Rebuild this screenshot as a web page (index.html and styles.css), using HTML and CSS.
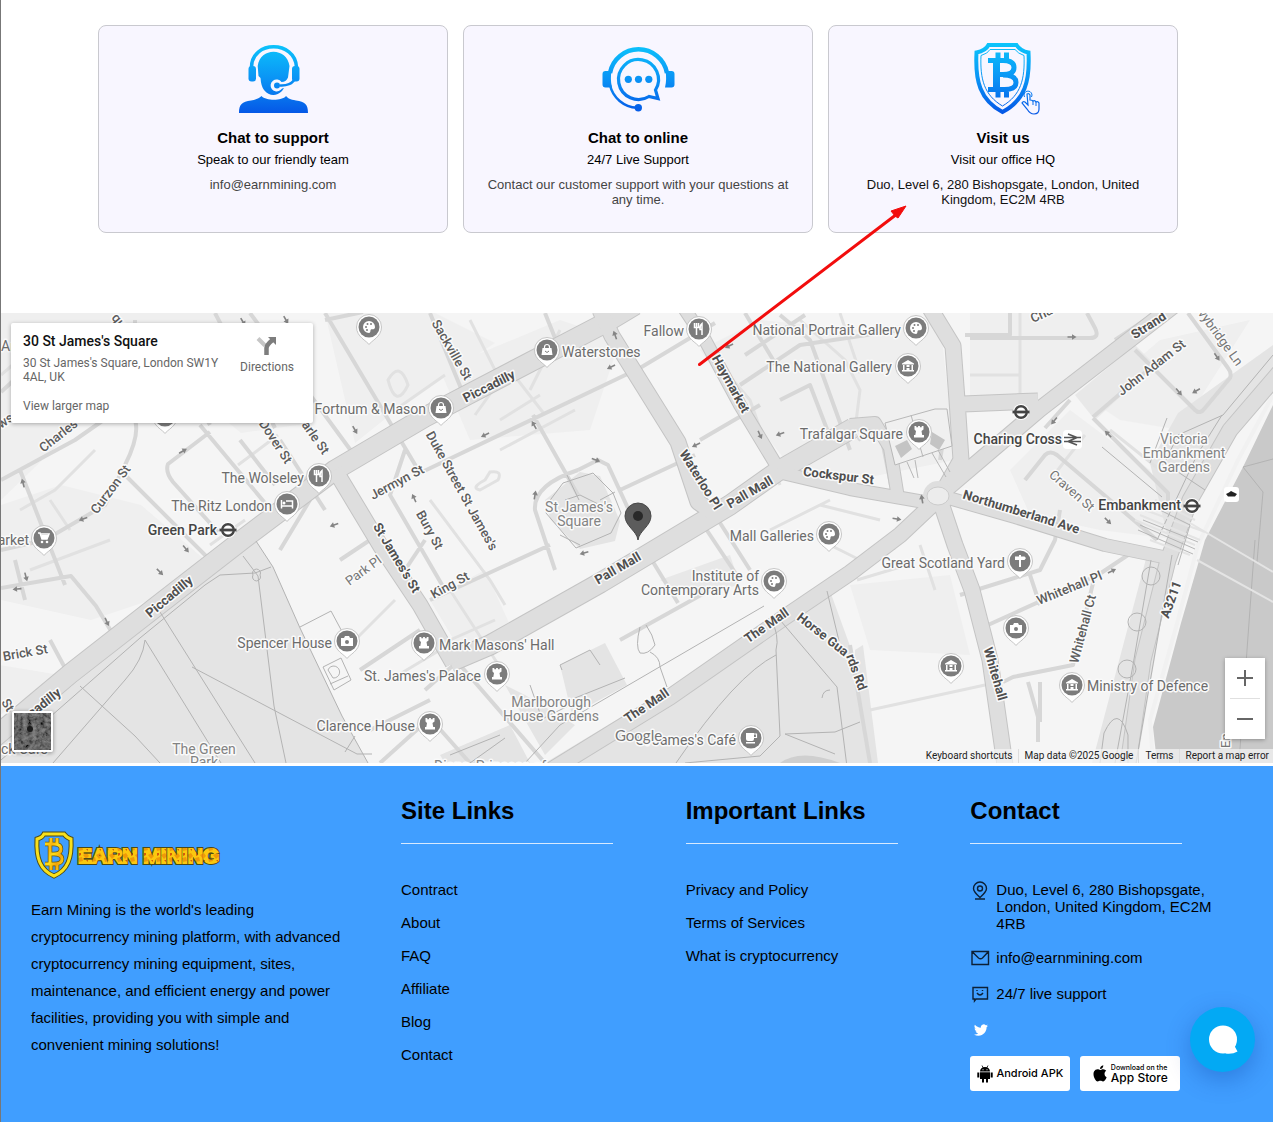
FILE: index.html
```html
<!DOCTYPE html>
<html lang="en">
<head>
<meta charset="utf-8">
<meta name="viewport" content="width=device-width, initial-scale=1">
<title>Contact - Earn Mining</title>
<link rel="stylesheet" href="styles.css">
</head>
<body>
<svg class="defs" width="0" height="0" aria-hidden="true">
  <defs>
    <linearGradient id="blue" x1="0" y1="5" x2="0" y2="75" gradientUnits="userSpaceOnUse"><stop offset="0" stop-color="#0cc4fb"/><stop offset=".5" stop-color="#0a93f5"/><stop offset="1" stop-color="#0556e6"/></linearGradient>
    <linearGradient id="gold" x1="0" y1="0" x2="1" y2="1"><stop offset="0" stop-color="#ffe81a"/><stop offset=".3" stop-color="#f7b40c"/><stop offset=".5" stop-color="#ffdf16"/><stop offset=".75" stop-color="#f3a20a"/><stop offset="1" stop-color="#ffe81a"/></linearGradient>
    <pattern id="nugget" width="13" height="11" patternUnits="userSpaceOnUse"><rect width="13" height="11" fill="#fbc80f"/><path d="M0 3l4-2 2 3-3 3zM8 6l4-1 1 4-4 1z" fill="#f09a08"/><path d="M9 1l2 0 0 2-2 1zM3 8l2 0 0 2z" fill="#d65c0a"/></pattern>
    <filter id="grain" x="0" y="0" width="1" height="1"><feTurbulence type="fractalNoise" baseFrequency=".22" numOctaves="4" seed="6"/><feColorMatrix values=".8 .4 0 0 -.3 .8 .4 0 0 -.3 .8 .4 0 0 -.3 0 0 0 0 1"/><feComponentTransfer><feFuncR type="linear" slope=".9" intercept="-.02"/><feFuncG type="linear" slope=".9" intercept="-.02"/><feFuncB type="linear" slope=".9" intercept="-.02"/></feComponentTransfer></filter>
    <g id="pin"><path d="M0 17.500C-2 14-12.500 10-12.500 0a12.500 12.500 0 0 1 25 0C12.500 10 2 14 0 17.500z" fill="#fff" stroke="#b9b9b9" stroke-width=".8"/><circle r="10.500" fill="#7c7c7c"/></g>
    <g id="palette"><use href="#pin"/><path d="M0-6a6 6 0 1 0 0 12c2 0 1-3 2-3.500s4 .5 4-2.500a6 6 0 0 0-6-6z" fill="#fff"/><g fill="#7c7c7c"><circle cx="-3" cy="0" r="1"/><circle cx="-1.500" cy="-3" r="1"/><circle cx="2" cy="-3" r="1"/><circle cx="-2" cy="3" r="1"/></g></g>
    <g id="bag"><use href="#pin"/><path d="M-4.500-2h9l1 7h-11z" fill="#fff"/><path d="M-2.500-1v-2a2.500 2.500 0 0 1 5 0v2" fill="none" stroke="#fff" stroke-width="1.200"/><path d="M-2 1q2 3 4 0" fill="none" stroke="#7c7c7c"/></g>
    <g id="fork"><use href="#pin"/><path d="M-4.500-6v4.500h4V-6M-2.500-6v12M3 6V-5.500q-2.500 2-2 6h2" fill="none" stroke="#fff" stroke-width="1.500"/></g>
    <g id="bed"><use href="#pin"/><path d="M-5.500-4v8.500M-5.500 2h11v2.500M-1-3H5.500V2" fill="none" stroke="#fff" stroke-width="1.500"/><circle cx="-3" cy="-1" r="1.500" fill="#fff"/></g>
    <g id="castle"><use href="#pin"/><path d="M-4.500-6h1.800v1.300h1.800V-6h1.800v1.300h1.800V-6h1.800v3.500l-2 1.500.7 4H5v2.500H-5V3h1.300L-3-1l-1.500-1.500z" fill="#fff"/></g>
    <g id="museum"><use href="#pin"/><path d="M-6-2.500L0-6l6 3.500v1H-6zM-5-1h1.500v5H-5zM-1.500-1h3v2h-3zM3.500-1H5v5H3.500zM-1.500 2h3v2h-3zM-6 4H6v1.500H-6z" fill="#fff"/></g>
    <g id="camera"><use href="#pin"/><path d="M-6-3h3l1-2h4l1 2h3v8H-6z" fill="#fff"/><circle cy="1" r="2" fill="#7c7c7c"/></g>
    <g id="cup"><use href="#pin"/><path d="M-5-5H3V1q0 2-2 2h-4q-2 0-2-2zM-5 4H4v1.500h-9z" fill="#fff"/><path d="M3-4h2.500v3.500H3" fill="none" stroke="#fff" stroke-width="1.200"/></g>
    <g id="cart"><use href="#pin"/><path d="M-6-5h2l2 6h5l2-5h-8" fill="none" stroke="#fff" stroke-width="1.500"/><path d="M-3-3h8L3 1h-5z" fill="#fff"/><circle cx="-2" cy="4" r="1.300" fill="#fff"/><circle cx="3" cy="4" r="1.300" fill="#fff"/></g>
    <g id="sign"><use href="#pin"/><path d="M-1-6h2v1.500h3.500L6-3 4.500-1H1v7h-2V-1h-4v-3.500h4z" fill="#fff"/></g>
    <g id="tube"><circle r="8" fill="#fff"/><circle r="5.800" fill="none" stroke="#444" stroke-width="2.400"/><path d="M-8.500 0h17" stroke="#444" stroke-width="2.800"/></g>
    <path id="way" d="M-4.500-.8H0V-2.800L4.500 0 0 2.800V.8h-4.500z" fill="#858585"/>
  </defs>
</svg>

<main>
  <section class="contact">
    <div class="cards">
      <article class="card">
        <svg class="card-icon" viewBox="0 0 80 80" aria-hidden="true" fill="url(#blue)">
          <path d="M6 74c0-9 3-11 12-12.500 6-1 8-2.500 10.500-4.500C33 62 49 62 53 57c2 2.500 4 3.500 10 4.500C72 63 75 65 75 74z"/>
          <path d="M24.700 27C27 8 54 8 56.500 27L55 38.500Q53 43 48.500 43a6 6 0 1 0-1 8Q49 49 51 49l-2 3C43 58 36 57 31 51q-3-4-3.500-12L25.500 37z"/>
          <path d="M18.500 28C19 1 62 1 63.500 28" fill="none" stroke="url(#blue)" stroke-width="3.500"/>
          <rect x="15.500" y="27" width="7.500" height="15.500" rx="3"/><rect x="59" y="27" width="7.500" height="15.500" rx="3"/>
          <path d="M62 39c-2 6-9 8-15 7.500" fill="none" stroke="url(#blue)" stroke-width="2.500"/><circle cx="44" cy="46.500" r="3"/>
        </svg>
        <h2>Chat to support</h2>
        <p class="lead">Speak to our friendly team</p>
        <p class="detail">info@earnmining.com</p>
      </article>
      <article class="card">
        <svg class="card-icon" viewBox="0 0 80 80" aria-hidden="true" fill="none" stroke="url(#blue)">
          <path d="M12 34a29 29 0 0 1 57 0" stroke-width="4.500"/>
          <path d="M12 46a29 29 0 0 0 27 22.700" stroke-width="2.500"/>
          <path d="M13.500 32H7.500q-3 0-3 3v10.500q0 3 3 3h6.500q-2-8-.5-16.500zM67.500 32h6q3 0 3 3v10.500q0 3-3 3H67q2-8 .5-16.500z" fill="url(#blue)" stroke="none"/>
          <path d="M51 57.500a20 20 0 1 1 6.500-6.500l2.500 8.500z" stroke-width="3.200"/>
          <g fill="url(#blue)" stroke="none"><circle cx="30.300" cy="40.300" r="3.600"/><circle cx="40.500" cy="40.300" r="3.600"/><circle cx="50.800" cy="40.300" r="3.600"/><circle cx="40.300" cy="68.700" r="3.700"/></g>
        </svg>
        <h2>Chat to online</h2>
        <p class="lead">24/7 Live Support</p>
        <p class="detail">Contact our customer support with your questions at any time.</p>
      </article>
      <article class="card">
        <svg class="card-icon" viewBox="0 0 80 80" aria-hidden="true" fill="none" stroke="url(#blue)">
          <path d="M25.500 6h28q4 6 12 7.500C67 42 62 61 39.500 73 17 61 12 42 13.500 13.500 21 12 24 9 25.500 6z" stroke-width="4"/>
          <path d="M27 10.500h25q3 4 9 6C62 40 58 56 39.500 67 21 56 17 40 18 16.500q7-2 9-6z" stroke-width="1"/>
          <path d="M25 21.500h15q11 0 11 7T40 35.500h-6M40 36q13 0 13 7.500T40 50.500H25M35 13.500V21M43.500 13.500V21M35 51v7.500M43.500 51v7.500" stroke-width="5"/>
          <path d="M33.500 21v30" stroke-width="7"/>
          <path d="M65 66l-3-3q-2-1-3 1l5 6q3 5 7 5 5 0 5-5v-6q-1-2-3-1-1-2-3-1-1-1-3-1v-5q-1-2-3-1z" fill="#f8f6ff" stroke-width="1.200"/>
          <path d="M61.500 58a4 4 0 1 1 7 0M70 62v4M73 63v4" stroke-width="1"/>
        </svg>
        <h2>Visit us</h2>
        <p class="lead">Visit our office HQ</p>
        <p class="detail dark">Duo, Level 6, 280 Bishopsgate, London, United Kingdom, EC2M 4RB</p>
      </article>
    </div>
  </section>

  <section class="map" aria-label="Map">
    <svg class="map-canvas" viewBox="1 313 1272 450" preserveAspectRatio="xMidYMid slice">
      <rect x="0" y="313" width="1273" height="450" fill="#f5f5f5"/>
      <g fill="#efefef">
        <path d="M1 313h250l60 110-70 10-60-50-90 30L1 500zM1 505l60-20 80 20 70 60-60 35-60 20-90-20zM325 313h110l60 30-90 60-50 40zM440 370l120-50 60 20-30 90-120 10zM700 350l60-30 100 10 80-10 15 140-100 20-70-20-70-90zM970 313h200l-110 90-90 5zM1010 470l60-60 80 60 30 70-80-10-70-15zM1090 400l70-60 90-20-70 110-60-10zM850 585l100-10 20 80-100-5zM0 665l60 10-60 40zM430 600l55-30 25 55-50 25z"/>
      </g>
      <g fill="#e8e8e8"><path d="M660 580l70-25 10 30-50 10zM1075 395l60-50 20 20-60 55z"/></g>
      <!-- parks and gardens -->
      <g fill="#e4e4e4">
        <path d="M1 742L256 541l17 26 27 61 42 88 26 47H1z"/>
        <path d="M545 763L830 591l20 55 20 117z"/>
        <path d="M545 500l35-28 20 4 20 45-5 20-35 8-30-30z"/>
        <path d="M560 665l45-22 22 42-55 30zM505 685l20 10 50 30-30 30z"/>
        <path d="M440 755l70-30 20 38h-85z"/>
        <path d="M1273 345l-95 68-28 50 18 75 40-70 65-75zM1147 555l25 3-35 205h-45z"/>
        <path d="M855 650l8-5 15 118h-23z"/>
      </g>
      <path d="M1273 405l-30 62-38 73-24 83-28 104 4 36h116z" fill="#c9c9c9"/>
      <path d="M780 763q20-15 60 0z" fill="#cfcfcf"/>
      <path d="M1273 395l-35 65-40 85-20 75-28 100 3 43" fill="none" stroke="#f1f1f1" stroke-width="4"/>
      <!-- minor streets -->
      <g fill="none" stroke="#e1e1e1" stroke-width="3">
        <path d="M1 375l40-35M20 510l35-20 40-40M238 465l40-30M210 545l35-25M395 410l50-35M470 320l30 60-25 35M510 370l35 45M540 395l-40 25M500 450l75-40M485 480q-15 8-5 10l18-10q5-10-8-8zM430 500l60 80 15 25M450 590l55 85M770 530l60-30M820 505l60 15M388 380q12-20 20 5-12 25-20-5zM395 600l-40 40M440 650l-50 30M450 640l45-20M870 710l115-25M800 320l45 40 15 30-5 40M1020 313v85M970 375h50M840 313l20 60M1050 480l35-45M1110 430l50 40M920 545l15 45M857 580l50-15M690 330l60 70 30 85M700 480l-55-90M560 330l-30 60M30 570l80-30M50 500l20 30M820 540l40 20 35-12"/>
      </g>
      <g fill="none" stroke="#d7d7d7" stroke-width="4" stroke-linejoin="round">
        <path d="M1 480L75 440l50-35M1 392l60-55M20 470l45 115M135 320v100q5 15-10 45l-20 40-60 35-44 10M125 475l90 90M210 432l-42 32q-3 8 5 18l45 50M200 425l65 78M165 345l45 80M240 440l35 45M280 440l45 70M215 313l60 115M250 313l110 150M325 320l38-8M325 313l95 160M310 500l-30 50M1 588l70-12 25 30 15 25M15 560l10 40M50 640l15 28M430 313l35 85M545 313l10 25M420 473l220-105 75-45M533 415l45 80M578 470q-45 15-43 40l20 60M578 470l20-10 10 5 30 65M430 600l120-55M620 490l75-35M405 450l-15 45 55 95M425 540l-20 30M700 440l60-35M745 313l30 50M780 400l30-15 25 65M740 385l60-40 100-15M780 315l30 25 40 110M745 355l60-40M1010 313v22h-45M970 338h120q10 0 5-10l-8-15M1135 350l60 60q5 5 10-2l25-30q2-5-2-10l-40-55M1115 340l60-40M1093 417l70-60M1093 418l75 75v15M1025 480l20-25q5-5 12 0l100 85M1070 400l-25 28M1060 510l-5 30-15 30-80 25M988 625l110-50 30-20M1095 575l-22 90-60 12-10 5M1028 682l10 35v25M1040 682v40M1030 575l10 30M850 645l20 118M650 557l28 46M700 520l40 60M715 515l35 55M620 640l90-50M460 665l85 98M425 690l40-35M360 670l60-40M370 730l60-30M380 763l50-45 40 45M340 560l45-30M940 460l5-30M858 440q20-15 25 5l8 40"/>
      </g>
      <!-- main roads, drawn as an outline with a lighter fill on top -->
      <g fill="none" stroke-linejoin="round">
        <g stroke="#c4c4c4">
          <path stroke-width="21" d="M-10 741L70 674l87-68 85-66 93-70 90-53L605 323l30-18M450 662l40-17 110-62 130-78 48-34 75-43"/>
          <path stroke-width="17" d="M335 470l45 75 40 60 33 58M600 310l12 26 66 106 20 60 14 10M925 300l28 46 4 54 4 60-21 37M963 404l75-3M940 500l5-10 95-81 150-116M935 502l-35 33-50 38-65 44-115 80-130 80M940 500l15 45 17 45 18 70 15 105M1290 360l-60 70-40 70-22 60-25 100-15 105"/>
          <path stroke-width="14" d="M682 305l23 35 35 65 38 63M778 472l72 17 80 14M945 497l70 20 90 28 68 14M850 425l25-2 15 25 8 50"/>
        </g>
        <g stroke="#dedede">
          <path stroke-width="19" d="M-10 741L70 674l87-68 85-66 93-70 90-53L605 323l30-18M450 662l40-17 110-62 130-78 48-34 75-43"/>
          <path stroke-width="15" d="M335 470l45 75 40 60 33 58M600 310l12 26 66 106 20 60 14 10M925 300l28 46 4 54 4 60-21 37M963 404l75-3M940 500l5-10 95-81 150-116M935 502l-35 33-50 38-65 44-115 80-130 80M940 500l15 45 17 45 18 70 15 105M1290 360l-60 70-40 70-22 60-25 100-15 105"/>
          <path stroke-width="12" d="M682 305l23 35 35 65 38 63M778 472l72 17 80 14M945 497l70 20 90 28 68 14M850 425l25-2 15 25 8 50"/>
        </g>
      </g>
      <circle cx="938" cy="496" r="15" fill="#dedede"/><ellipse cx="938" cy="496" rx="11" ry="9" fill="#ececec" stroke="#ccc"/>
      <!-- footpaths and lot lines -->
      <path d="M885 423l50-14h12l5 37-57 19zM911 415l12 42M932 453l14 24M938 450l12 22M907 462l7 16M915 460l3 18" fill="#f0f0f0" stroke="#b8b8b8"/>
      <path d="M895 446l12-6 5 9-11 9zM932 432l13 8-6 10-9-6z" fill="#c4c4c4"/>
      <g fill="none" stroke="#b3b3b3" stroke-width="1">
        <path d="M1 760L140 638l65-53 15-10 35-2 16-6M243 556l15 20 16 130 12 57M160 612l95 151M145 640l76 123M145 640q-2 20-20 40l-72 83M80 686l55 50 25 27M192 667l165 87h15M300 627l31-16 15 28M345 752l10-16M256 541l17 26 27 61 42 88 26 47M253 575a4 4 0 1 0 7 0 4 4 0 1 0-7 0"/>
        <path d="M323 667l18-9 10 22-17 10zM328 670a6 6 0 1 1 5 8zM330 684l18-8"/>
        <path d="M764 606L560 725l-35 38M770 616q10 20 6 34l4 86-20 20-75 7M776 655q-40 20-100 108M780 620l57 67 10 80M785 734l50-2 25-10M785 734l50 20M827 591l12 50M830 690q-7 0-8 8M562 670l-2-5 30-15 10 15M570 700l55-22M530 685l12 34 28-14M450 755l50-20M470 763l35-25M640 627q-5 20 0 26 8 2 15-8-2-10-9-20M650 652q10 5 10 15l7 20"/>
        <path d="M548 503l15-20 30-10 20 20 8 20-10 20-35 15-30-35zM567 475l12 25M600 500l15-8M565 500l15-5 20 10M560 535l20 10"/>
        <path d="M1273 355l-50 60-45 20-12 25M1222 415l-25 40-40 85M1102 447l60 50M1167 418l-17 45M1175 470l30 20M1172 555l-36 208M1151 560l-18 105-18 98"/>
        <circle cx="1151" cy="576" r="9"/><circle cx="1137" cy="622" r="9"/><circle cx="1127" cy="669" r="9"/><path d="M1100 763l4-30q14-30 24 2v28M1255 540l-8 110-8 113M1243 467l20 25-6 70M1243 467l30-8" stroke-dasharray="none"/>
      </g>
      <g fill="none" stroke="#e4e4e4" stroke-width="2"><path d="M1185 520l88 52M1197 560l76 42M1135 520l60 25M1140 515l60 25M1145 510l60 22M1150 540l40 15M1155 500l40 20"/></g>
      <g fill="none" stroke="#b5b5b5"><path d="M1140 525l55 24M1138 530l55 24M1143 520l55 22M1150 505l40 20-12 40"/></g>
      <!-- one-way marks -->
      <g>
        <use href="#way" transform="translate(183 451) rotate(-30)"/><use href="#way" transform="translate(23 483) rotate(-105)"/><use href="#way" transform="translate(83 519) rotate(160)"/><use href="#way" transform="translate(334 525) rotate(160)"/><use href="#way" transform="translate(355 430) rotate(60)"/><use href="#way" transform="translate(414 498) rotate(-115)"/><use href="#way" transform="translate(485 435) rotate(155)"/><use href="#way" transform="translate(534 425) rotate(-120)"/><use href="#way" transform="translate(611 367) rotate(155)"/><use href="#way" transform="translate(615 335) rotate(-110)"/><use href="#way" transform="translate(596 460) rotate(20)"/><use href="#way" transform="translate(535 495) rotate(-80)"/><use href="#way" transform="translate(696 445) rotate(155)"/><use href="#way" transform="translate(729 346) rotate(155)"/><use href="#way" transform="translate(760 435) rotate(65)"/><use href="#way" transform="translate(780 434) rotate(160)"/><use href="#way" transform="translate(1072 337)"/><use href="#way" transform="translate(1217 357) rotate(55)"/><use href="#way" transform="translate(1196 391) rotate(150)"/><use href="#way" transform="translate(1179 392) rotate(50)"/><use href="#way" transform="translate(1108 434) rotate(-135)"/><use href="#way" transform="translate(1054 421) rotate(130)"/><use href="#way" transform="translate(922 499) rotate(-100)"/><use href="#way" transform="translate(897 519) rotate(10)"/><use href="#way" transform="translate(1108 521) rotate(45)"/><use href="#way" transform="translate(1112 571) rotate(-25)"/><use href="#way" transform="translate(160 572) rotate(45)"/><use href="#way" transform="translate(186 549) rotate(50)"/><use href="#way" transform="translate(26 577) rotate(75)"/><use href="#way" transform="translate(17 589) rotate(175)"/><use href="#way" transform="translate(107 622) rotate(65)"/><use href="#way" transform="translate(584 553) rotate(165)"/><use href="#way" transform="translate(243 322) rotate(60)"/><use href="#way" transform="translate(286 320) rotate(60)"/>
      </g>
      <!-- street names -->
      <g class="street">
        <text transform="translate(111 318) rotate(50)">qu</text>
        <text transform="translate(1 429) rotate(-35)">ws</text>
        <text transform="translate(61 439) rotate(-38)" text-anchor="middle">Charles</text>
        <text transform="translate(114 492) rotate(-53)" text-anchor="middle">Curzon St</text>
        <text transform="translate(272 444) rotate(57)" text-anchor="middle">Dover St</text>
        <text transform="translate(312 440) rotate(55)" text-anchor="middle">arle St</text>
        <text transform="translate(448 352) rotate(60)" text-anchor="middle">Sackville St</text>
        <text transform="translate(399 486) rotate(-28)" text-anchor="middle">Jermyn St</text>
        <text transform="translate(458 493) rotate(61)" text-anchor="middle">Duke Street St James's</text>
        <text transform="translate(426 532) rotate(61)" text-anchor="middle">Bury St</text>
        <text transform="translate(452 589) rotate(-29)" text-anchor="middle">King St</text>
        <text class="thin" transform="translate(366 574) rotate(-36)" text-anchor="middle">Park Pl</text>
        <text transform="translate(26 657) rotate(-10)" text-anchor="middle">Brick St</text>
        <text transform="translate(1 702) rotate(60)">St</text>
        <text transform="translate(1033 323) rotate(-25)">Cha</text>
        <text transform="translate(1154 371) rotate(-38)" text-anchor="middle">John Adam St</text>
        <text class="thin" transform="translate(1217 340) rotate(54)" text-anchor="middle">vybridge Ln</text>
        <text class="thin" transform="translate(1069 494) rotate(41)" text-anchor="middle">Craven St</text>
        <text transform="translate(1071 592) rotate(-22)" text-anchor="middle">Whitehall Pl</text>
        <text transform="translate(1087 630) rotate(-75)" text-anchor="middle">Whitehall Ct</text>
        <text class="thin" transform="translate(1230 748) rotate(-90)">En</text>
      </g>
      <g class="street main">
        <text transform="translate(491 390) rotate(-27)" text-anchor="middle">Piccadilly</text>
        <text transform="translate(172 600) rotate(-40)" text-anchor="middle">Piccadilly</text>
        <text transform="translate(47 706) rotate(-38)" text-anchor="middle">cadilly</text>
        <text transform="translate(393 560) rotate(59)" text-anchor="middle">St James's St</text>
        <text transform="translate(620 572) rotate(-30)" text-anchor="middle">Pall Mall</text>
        <text transform="translate(752 496) rotate(-30)" text-anchor="middle">Pall Mall</text>
        <text transform="translate(697 482) rotate(58)" text-anchor="middle">Waterloo Pl</text>
        <text transform="translate(727 386) rotate(61)" text-anchor="middle">Haymarket</text>
        <text transform="translate(838 480) rotate(7)" text-anchor="middle">Cockspur St</text>
        <text transform="translate(1151 329) rotate(-33)" text-anchor="middle">Strand</text>
        <text transform="translate(1020 516) rotate(17)" text-anchor="middle">Northumberland Ave</text>
        <text transform="translate(769 629) rotate(-35)" text-anchor="middle">The Mall</text>
        <text transform="translate(649 709) rotate(-34)" text-anchor="middle">The Mall</text>
        <text transform="translate(796 619) rotate(38)">Horse Gua</text><text transform="translate(846 656) rotate(70)">rds Rd</text>
        <text transform="translate(991 675) rotate(74)" text-anchor="middle">Whitehall</text>
        <text transform="translate(1175 601) rotate(-70)" text-anchor="middle">A3211</text>
      </g>
      <!-- places -->
      <g class="place" text-anchor="end">
        <text x="684" y="336">Fallow</text><text x="901" y="335">National Portrait Gallery</text><text x="892" y="372">The National Gallery</text><text x="903" y="439">Trafalgar Square</text><text x="426" y="414">Fortnum &amp; Mason</text><text x="304" y="483">The Wolseley</text><text x="272" y="511">The Ritz London</text><text x="29" y="545">arket</text><text x="814" y="541">Mall Galleries</text><text x="759" y="581">Institute of</text><text x="759" y="595">Contemporary Arts</text><text x="1005" y="568">Great Scotland Yard</text><text x="332" y="648">Spencer House</text><text x="481" y="681">St. James's Palace</text><text x="415" y="731">Clarence House</text><text x="736" y="745">St James's Café</text>
      </g>
      <g class="place"><text x="562" y="357">Waterstones</text><text x="439" y="650">Mark Masons' Hall</text><text x="1087" y="691">Ministry of Defence</text><text x="1" y="351">Ar</text><text x="1" y="754">ck Café</text></g>
      <g class="place garden" text-anchor="middle">
        <text x="579" y="512">St James's</text><text x="579" y="526">Square</text><text x="551" y="707">Marlborough</text><text x="551" y="721">House Gardens</text><text x="204" y="754">The Green</text><text x="204" y="767">Park</text><text x="1184" y="444">Victoria</text><text x="1184" y="458">Embankment</text><text x="1184" y="472">Gardens</text><text x="490" y="771">Diana, Princess of</text>
      </g>
      <g class="station" text-anchor="end"><text x="217" y="535">Green Park</text><text x="1062" y="444">Charing Cross</text><text x="1181" y="510">Embankment</text></g>
      <use href="#tube" x="228" y="530"/><use href="#tube" x="1021" y="412"/><use href="#tube" x="1192" y="506"/>
      <rect x="1063" y="430" width="19" height="19" rx="4" fill="#fff"/><path d="M1064 437.500h17M1064 441.500h17M1068 434l9 3.500-9 4 9 3.500" fill="none" stroke="#555" stroke-width="1.600"/>
      <rect x="1224" y="487" width="15" height="15" rx="3" fill="#fff"/><path d="M1226 494l3-1.500 2-1.500 3 1.500 3 1.500-2 2.500h-7z" fill="#222"/>
      <use href="#palette" x="369" y="327"/><use href="#bag" x="547" y="350"/><use href="#fork" x="699" y="329"/><use href="#palette" x="916" y="328"/><use href="#museum" x="908" y="366"/><use href="#bag" x="441" y="408"/><use href="#fork" x="319" y="476"/><use href="#bed" x="287" y="504"/><use href="#cart" x="44" y="538"/><use href="#castle" x="919" y="432"/><use href="#palette" x="829" y="534"/><use href="#sign" x="1020" y="561"/><use href="#palette" x="774" y="581"/><use href="#camera" x="347" y="641"/><use href="#castle" x="424" y="643"/><use href="#castle" x="497" y="674"/><use href="#castle" x="430" y="724"/><use href="#camera" x="1016" y="628"/><use href="#museum" x="951" y="666"/><use href="#museum" x="1072" y="685"/><use href="#cup" x="751" y="738"/><use href="#pin" x="165" y="416"/>
      <path d="M638 540c-1-9-13-14-13-24a13 13 0 0 1 26 0c0 10-12 15-13 24z" fill="#5c5c5c" stroke="#474747"/><circle cx="638" cy="516" r="5" fill="#292929"/>
      <text class="google" x="615" y="741">Google</text>
    </svg>

    <div class="place-card">
      <div class="place-text">
        <h3>30 St James's Square</h3>
        <p>30 St James's Square, London SW1Y 4AL, UK</p>
        <a href="#larger">View larger map</a>
      </div>
      <a class="directions" href="#directions">
        <svg width="22" height="22" viewBox="0 0 22 22" aria-hidden="true"><path d="M2 3.500l7 7" stroke="#c6c6c6" stroke-width="4"/><path d="M10.500 20v-7q0-3 6-8" fill="none" stroke="#7d7d7d" stroke-width="4.500"/><path d="M12 2h8v8z" fill="#7d7d7d"/></svg>
        Directions
      </a>
    </div>
    <button class="thumb" type="button" aria-label="Satellite view"><svg width="37" height="37" aria-hidden="true"><rect width="37" height="37" filter="url(#grain)"/><rect width="37" height="37" fill="#222" opacity=".35"/><path d="M0 32l14-8 22-10M16 37l6-12" stroke="#888" stroke-width="2" fill="none" opacity=".5"/><circle cx="16" cy="16" r="3" fill="#1c1c1c"/></svg></button>
    <div class="zoom">
      <button type="button" aria-label="Zoom in"><svg width="16" height="16" aria-hidden="true"><path d="M0 8h16M8 0v16" stroke="#666" stroke-width="2"/></svg></button>
      <button type="button" aria-label="Zoom out"><svg width="16" height="16" aria-hidden="true"><path d="M0 8h16" stroke="#666" stroke-width="2"/></svg></button>
    </div>
    <ul class="credits">
      <li><button type="button">Keyboard shortcuts</button></li><li>Map data ©2025 Google</li><li><a href="#terms">Terms</a></li><li><a href="#report">Report a map error</a></li>
    </ul>
    <svg class="arrow" width="212" height="164" viewBox="0 0 212 164" aria-hidden="true"><path d="M2.500 160.500L200 10" stroke="#f20d0d" stroke-width="3" stroke-linecap="round"/><path d="M209 2l-8 12-3-2-4-5z" fill="#f20d0d" stroke="#f20d0d"/></svg>
  </section>
</main>

<footer class="footer">
  <div class="about">
    <svg class="logo" width="200" height="50" viewBox="0 0 200 50" role="img" aria-label="Earn Mining">
      <path d="M13 4h20q3 4 7 5c1 19-3 31-17 37C9 40 5 28 6 9q5-1 7-5z" fill="none" stroke="#4c4a16" stroke-width="5"/>
      <path d="M13 4h20q3 4 7 5c1 19-3 31-17 37C9 40 5 28 6 9q5-1 7-5z" fill="none" stroke="#f8e01c" stroke-width="3"/>
      <path d="M14 14h9q7 0 7 5t-7 5h-4M23 24q8 0 8 5t-8 5h-9M19 13v22M20 8v6M26 8v6M20 34v6M26 34v6" fill="none" stroke="#6b5a10" stroke-width="4.500"/>
      <path d="M14 14h9q7 0 7 5t-7 5h-4M23 24q8 0 8 5t-8 5h-9M19 13v22M20 8v6M26 8v6M20 34v6M26 34v6" fill="none" stroke="url(#gold)" stroke-width="3"/>
      <text class="logo-edge" x="47" y="33">EARN MINING</text><text class="logo-text" x="47" y="33" aria-hidden="true">EARN MINING</text>
    </svg>
    <p>Earn Mining is the world's leading cryptocurrency mining platform, with advanced cryptocurrency mining equipment, sites, maintenance, and efficient energy and power facilities, providing you with simple and convenient mining solutions!</p>
  </div>
  <nav aria-labelledby="site">
    <h2 id="site">Site Links</h2>
    <ul class="links"><li><a href="#contract">Contract</a></li><li><a href="#about">About</a></li><li><a href="#faq">FAQ</a></li><li><a href="#affiliate">Affiliate</a></li><li><a href="#blog">Blog</a></li><li><a href="#contact">Contact</a></li></ul>
  </nav>
  <nav aria-labelledby="important">
    <h2 id="important">Important Links</h2>
    <ul class="links"><li><a href="#privacy">Privacy and Policy</a></li><li><a href="#service">Terms of Services</a></li><li><a href="#crypto">What is cryptocurrency</a></li></ul>
  </nav>
  <section aria-labelledby="reach">
    <h2 id="reach">Contact</h2>
    <ul class="reach">
      <li><svg width="20" height="20" viewBox="0 0 20 20" aria-hidden="true"><path d="M10 16.500C6 13 3.500 10.500 3.500 7.500a6.500 6.500 0 0 1 13 0c0 3-2.500 5.500-6.500 9zM5 18h10"/><circle cx="10" cy="7.500" r="2.500"/></svg><span>Duo, Level 6, 280 Bishopsgate, London, United Kingdom, EC2M 4RB</span></li>
      <li><svg width="20" height="20" viewBox="0 0 20 20" aria-hidden="true"><path d="M2 3.500h16.500v13H2zM2 3.500l6.500 6.500q2 1.500 4 0L18.500 3.500"/></svg><a href="mailto:info@earnmining.com">info@earnmining.com</a></li>
      <li><svg width="20" height="20" viewBox="0 0 20 20" aria-hidden="true"><path d="M3 3.500h14.500V15H6L4.500 17l0-2H3zM7 9q3 4 6 0M7 6v1M12.500 6v1"/></svg><span>24/7 live support</span></li>
    </ul>
    <a class="twitter" href="#twitter" aria-label="Twitter"><svg width="14" height="14" viewBox="0 0 24 24" aria-hidden="true"><path fill="#fff" d="M23.950 4.570a10 10 0 0 1-2.820.770 4.960 4.960 0 0 0 2.160-2.720c-.95.550-2 .960-3.130 1.190a4.920 4.920 0 0 0-8.380 4.480C7.690 8.090 4.070 6.130 1.640 3.160a4.920 4.920 0 0 0 1.520 6.570 4.900 4.900 0 0 1-2.230-.610v.060a4.920 4.920 0 0 0 3.950 4.830 5 5 0 0 1-2.210.080 4.940 4.940 0 0 0 4.600 3.420A9.870 9.870 0 0 1 0 19.540a14 14 0 0 0 7.550 2.210c9.050 0 14-7.500 14-13.980l-.02-.64a9.900 9.900 0 0 0 2.420-2.560z"/></svg></a>
    <div class="stores">
      <a href="#apk"><svg width="16" height="18" viewBox="0 0 16 18" aria-hidden="true"><path d="M3 6.500a5 4.500 0 0 1 10 0zM3 7.200h10V14H3zM.3 7.500h2v5h-2zM13.700 7.500h2v5h-2zM5 14h2v3.500H5zM9 14h2v3.500H9z"/><path d="M5 .5l1.300 2.500M11 .5L9.700 3" stroke="#000" stroke-width=".8"/><path d="M5.500 4.300h1v1h-1zM9.500 4.300h1v1h-1z" fill="#fff"/></svg><span class="apk">Android APK</span></a>
      <a href="#ios"><svg width="15" height="19" viewBox="2.500 0 19 24" aria-hidden="true"><path d="M17.050 12.540c0-2.600 2.120-3.850 2.220-3.910a4.780 4.780 0 0 0-3.760-2.030c-1.600-.16-3.120.940-3.930.940s-2.060-.92-3.390-.89a5 5 0 0 0-4.220 2.560c-1.800 3.130-.46 7.760 1.290 10.300.86 1.240 1.880 2.640 3.230 2.590 1.290-.05 1.780-.84 3.340-.84s2 .840 3.370.810c1.390-.02 2.270-1.270 3.120-2.520a11 11 0 0 0 1.410-2.900 4.500 4.500 0 0 1-2.680-4.110zM14.480 4.910A4.600 4.600 0 0 0 15.530 1.600a4.660 4.660 0 0 0-3 1.560 4.360 4.360 0 0 0-1.080 3.200 3.850 3.850 0 0 0 3.030-1.450z"/></svg><span class="store"><small>Download on the</small>App Store</span></a>
    </div>
  </section>
</footer>
<button class="chat" type="button" aria-label="Open chat"><svg width="30" height="30" viewBox="0 0 30 30" aria-hidden="true"><circle cx="15" cy="14.500" r="14" fill="#fff"/><path d="M26 20l3.500 6.500q-5 3-12 2z" fill="#fff"/></svg></button>
</body>
</html>
```
FILE: styles.css
```css
* { box-sizing: border-box; }
body {
  margin: 0;
  border-left: 1px solid #777;
  background: #fff;
  color: #000;
  font: 15px/17px "Liberation Sans", Arial, sans-serif;
}
h2, h3, p, ul { margin: 0; padding: 0; }
ul { list-style: none; }
a { color: inherit; text-decoration: none; }
button { border: 0; padding: 0; background: none; font: inherit; color: inherit; cursor: pointer; }
.defs { position: absolute; }

/* contact cards */
.contact { padding: 25px 0 80px 2px; }
.cards {
  display: grid;
  grid-template-columns: repeat(3, 1fr);
  gap: 15px;
  max-width: 1080px;
  margin: 0 auto;
}
.card {
  padding: 13px 20px 25px;
  border: 1px solid #c9c9cf;
  border-radius: 8px;
  background: #f8f6ff;
  text-align: center;
}
.card-icon { display: block; width: 80px; height: 80px; margin: 0 auto 10px; }
.card h2 { font-size: 15px; line-height: 18px; }
.lead, .detail { font-size: 13px; line-height: 15px; }
.lead { margin-top: 5px; }
.detail { margin-top: 10px; color: #444; }
.detail.dark { color: #111; }

/* map */
.map { position: relative; height: 453px; padding-bottom: 3px; font-family: Roboto, sans-serif; }
.map-canvas { display: block; width: 100%; height: 450px; }
.map-canvas text { paint-order: stroke; stroke: #fafafa; stroke-width: 3px; stroke-linejoin: round; }
.street { font-size: 13px; font-weight: 500; fill: #5c5c5c; }
.main { font-weight: 700; fill: #4f4f4f; }
.street .thin { font-weight: 400; fill: #757575; }
.place { font-size: 14px; fill: #6c6c6c; }
.garden { fill: #838383; }
.station { font-size: 14px; font-weight: 500; fill: #444; }
.map-canvas .google { font-family: Lato, sans-serif; font-size: 15px; fill: #777; }
.place-card {
  position: absolute;
  top: 10px;
  left: 10px;
  display: flex;
  justify-content: space-between;
  width: 302px;
  height: 100px;
  padding: 10px 19px 9px 12px;
  border-radius: 2px;
  background: #fff;
  box-shadow: 0 1px 4px rgba(0, 0, 0, .3);
  color: #666;
  font-size: 12px;
  line-height: 14px;
}
.place-text { width: 204px; }
.place-card h3 { color: #111; font-size: 14px; font-weight: 500; line-height: 17px; }
.place-card p { margin: 6px 0 15px; }
.directions { display: flex; flex-direction: column; align-items: center; gap: 4px; padding-top: 2px; }
.directions svg { margin-bottom: -1px; }
.thumb {
  position: absolute;
  left: 11px;
  bottom: 14px;
  width: 41px;
  height: 41px;
  border: 2px solid #fff;
  border-radius: 2px;
  box-shadow: 0 1px 4px rgba(0, 0, 0, .4);
}
.thumb svg { display: block; }
.zoom {
  position: absolute;
  right: 8px;
  bottom: 27px;
  width: 40px;
  padding: 0 5px;
  background: #fff;
  box-shadow: 0 1px 4px rgba(0, 0, 0, .3);
}
.zoom button { display: grid; place-items: center; width: 100%; height: 40px; }
.zoom button + button { height: 41px; border-top: 1px solid #e0e0e0; }
.credits {
  position: absolute;
  right: 0;
  bottom: 3px;
  display: flex;
  background: rgba(245, 245, 245, .7);
  color: #222;
  font-size: 10px;
  line-height: 14px;
}
.credits li { padding: 0 4px 0 6px; }
.credits li + li { margin-left: 1px; border-left: 1px solid #ddd; }
.arrow { position: absolute; top: -109px; left: 54.700%; }

/* footer */
.footer {
  display: grid;
  grid-template-columns: 26fr 20fr 20fr 20fr;
  padding: 31px 18px 31px 30px;
  background: #409eff;
}
.about { padding: 33px 56px 0 0; }
.logo { display: block; margin-bottom: 16px; }
.logo text { font: bold 21px "Liberation Sans", sans-serif; }
.logo-edge { fill: #4c4a16; stroke: #4c4a16; stroke-width: 4px; }
.logo-text { fill: url(#nugget); stroke: url(#nugget); stroke-width: 2px; }
.about p { line-height: 27px; }
.footer h2 { font-size: 24px; line-height: 28px; }
.footer h2::after { content: ""; display: block; width: 212px; height: 1px; margin: 18px 0 37px; background: #d8eaff; }
.links li { margin-bottom: 16px; }
.reach { display: grid; gap: 15px; max-width: 250px; }
.reach li { display: flex; align-items: center; gap: 6px; min-height: 21px; }
.reach li:first-child { align-items: flex-start; }
.reach svg { flex: none; fill: none; stroke: #0c2036; stroke-width: 1.400px; }
.twitter { display: block; width: 16px; height: 16px; margin: 19px 0 17px 4px; }
.twitter svg { display: block; }
.stores { display: flex; gap: 10px; }
.stores a {
  display: flex;
  align-items: center;
  justify-content: center;
  gap: 3px;
  width: 100px;
  height: 35px;
  border-radius: 3px;
  background: #fff;
  font-family: Inter, sans-serif;
}
.apk { font-size: 11px; font-weight: 500; }
.store { font-size: 12px; line-height: 12px; font-weight: 500; }
.store small { display: block; font-size: 7px; line-height: 8px; }
.chat {
  position: fixed;
  right: 18px;
  bottom: 50px;
  display: grid;
  place-items: center;
  width: 65px;
  height: 65px;
  border-radius: 50%;
  background: #03a9f4;
  box-shadow: 0 8px 24px rgba(0, 50, 150, .3);
}
```
